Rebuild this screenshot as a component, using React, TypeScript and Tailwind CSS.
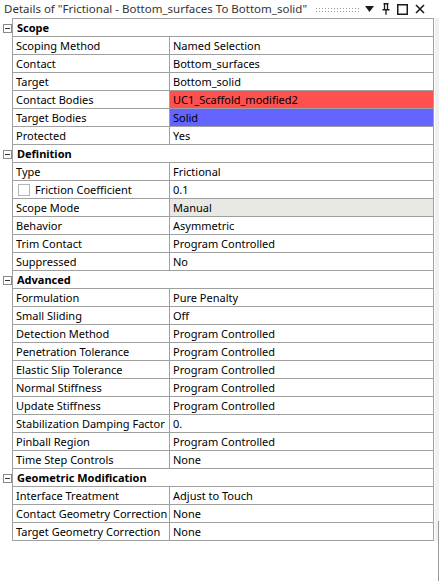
import React from "react";

type Row =
  | { kind: "section"; label: string }
  | { kind: "prop"; label: string; value: string; tone?: "red" | "blue" | "gray"; check?: boolean };

const rows: Row[] = [
  { kind: "section", label: "Scope" },
  { kind: "prop", label: "Scoping Method", value: "Named Selection" },
  { kind: "prop", label: "Contact", value: "Bottom_surfaces" },
  { kind: "prop", label: "Target", value: "Bottom_solid" },
  { kind: "prop", label: "Contact Bodies", value: "UC1_Scaffold_modified2", tone: "red" },
  { kind: "prop", label: "Target Bodies", value: "Solid", tone: "blue" },
  { kind: "prop", label: "Protected", value: "Yes" },
  { kind: "section", label: "Definition" },
  { kind: "prop", label: "Type", value: "Frictional" },
  { kind: "prop", label: "Friction Coefficient", value: "0.1", check: true },
  { kind: "prop", label: "Scope Mode", value: "Manual", tone: "gray" },
  { kind: "prop", label: "Behavior", value: "Asymmetric" },
  { kind: "prop", label: "Trim Contact", value: "Program Controlled" },
  { kind: "prop", label: "Suppressed", value: "No" },
  { kind: "section", label: "Advanced" },
  { kind: "prop", label: "Formulation", value: "Pure Penalty" },
  { kind: "prop", label: "Small Sliding", value: "Off" },
  { kind: "prop", label: "Detection Method", value: "Program Controlled" },
  { kind: "prop", label: "Penetration Tolerance", value: "Program Controlled" },
  { kind: "prop", label: "Elastic Slip Tolerance", value: "Program Controlled" },
  { kind: "prop", label: "Normal Stiffness", value: "Program Controlled" },
  { kind: "prop", label: "Update Stiffness", value: "Program Controlled" },
  { kind: "prop", label: "Stabilization Damping Factor", value: "0." },
  { kind: "prop", label: "Pinball Region", value: "Program Controlled" },
  { kind: "prop", label: "Time Step Controls", value: "None" },
  { kind: "section", label: "Geometric Modification" },
  { kind: "prop", label: "Interface Treatment", value: "Adjust to Touch" },
  { kind: "prop", label: "Contact Geometry Correction", value: "None" },
  { kind: "prop", label: "Target Geometry Correction", value: "None" },
];

function CollapseBox() {
  return (
    <div className="flex h-[9px] w-[9px] items-center justify-center border border-[#8a8a8a] bg-white">
      <div className="h-px w-[5px] bg-[#333]" />
    </div>
  );
}

function TitleBar() {
  return (
    <div className="flex h-[18px] items-center pl-[4px] pr-[14px] text-[11.5px] text-[#333]">
      <span className="whitespace-nowrap leading-none">Details of "Frictional - Bottom_surfaces To Bottom_solid"</span>
      <div className="ml-[8px] h-[5px] flex-1 bg-[radial-gradient(circle,#9a9a9a_0.7px,transparent_0.9px)] bg-[length:3px_3px]" />
      <svg width="9" height="6" viewBox="0 0 9 6" className="ml-[5px]">
        <path d="M0 0h9L4.5 6z" fill="#1a1a1a" />
      </svg>
      <svg width="8" height="12" viewBox="0 0 8 12" className="ml-[8px]">
        <path d="M1.5 0.75h5M2.5 0.75v6M5.5 0.75v6M0.5 6.75h7M4 6.75v5" stroke="#1a1a1a" strokeWidth="1.3" fill="none" />
      </svg>
      <svg width="11" height="11" viewBox="0 0 11 11" className="ml-[7px]">
        <rect x="0.75" y="0.75" width="9.5" height="9.5" stroke="#1a1a1a" strokeWidth="1.5" fill="none" />
      </svg>
      <svg width="10" height="10" viewBox="0 0 10 10" className="ml-[7px]">
        <path d="M1 1l8 8M9 1l-8 8" stroke="#1a1a1a" strokeWidth="1.6" />
      </svg>
    </div>
  );
}

function toneClass(tone?: "red" | "blue" | "gray") {
  if (tone === "red") return "bg-[#ff5050]";
  if (tone === "blue") return "bg-[#6464ff]";
  if (tone === "gray") return "bg-[#e8e8e4]";
  return "";
}

export default function App() {
  return (
    <div
      className="relative h-[581px] w-[439px] overflow-hidden bg-white text-[11px] text-black"
      style={{ fontFamily: '"Noto Sans", "Open Sans", sans-serif' }}
    >
      <TitleBar />
      <div className="flex">
        <div className="w-[12px]">
          {rows.map((r, i) => (
            <div key={i} className={`flex h-[18px] items-center pl-[3px] ${i === 0 ? "mt-[1px]" : ""}`}>
              {r.kind === "section" ? <CollapseBox /> : null}
            </div>
          ))}
        </div>
        <div className="w-[422px] border-x border-t border-[#a0a0a0]">
          {rows.map((r, i) =>
            r.kind === "section" ? (
              <div key={i} className="flex h-[18px] items-center border-b border-[#a0a0a0] pl-[4px] font-bold leading-none">
                {r.label}
              </div>
            ) : (
              <div key={i} className="flex h-[18px] border-b border-[#a0a0a0] leading-none">
                <div className="flex w-[157px] items-center overflow-hidden border-r border-[#a0a0a0] pl-[3px] whitespace-nowrap">
                  {r.check ? (
                    <div className="ml-[2px] mr-[5px] h-[12px] w-[12px] border border-[#b4b4b4] bg-white" />
                  ) : null}
                  {r.label}
                </div>
                <div className={`flex flex-1 items-center pl-[3px] whitespace-nowrap ${toneClass(r.tone)}`}>{r.value}</div>
              </div>
            )
          )}
        </div>
        <div className="relative ml-px w-[4px] bg-[#f0f0f0]">
          <div className="absolute right-0 top-[503px] h-[60px] w-px bg-[#9a9a9a]" />
        </div>
      </div>
    </div>
  );
}
